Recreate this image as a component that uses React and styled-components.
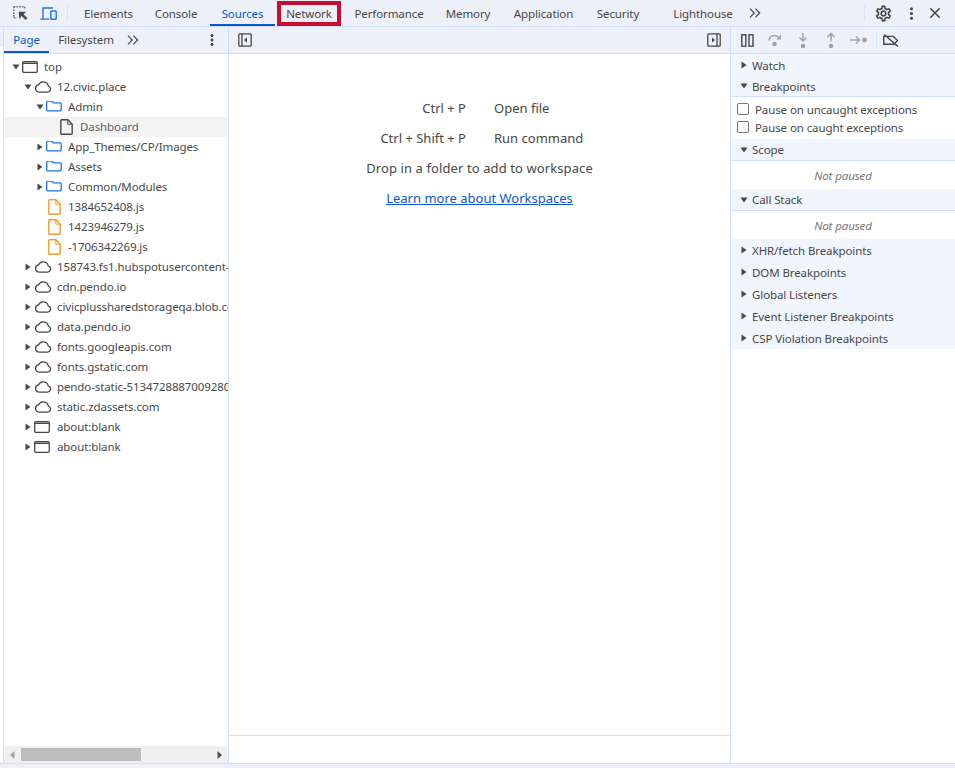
import React from 'react';
import styled, { createGlobalStyle } from 'styled-components';
import { MdOutlineSettings, MdMoreVert, MdClose } from 'react-icons/md';

const GlobalStyle = createGlobalStyle`
  html, body { margin: 0; padding: 0; background: #fff; }
  body { font-family: "Noto Sans", "Open Sans", sans-serif; font-size: 11.5px; letter-spacing: -0.1px; color: #474747; }
  svg { display: block; flex: none; }
`;

const BAR = '#edf0f8';
const HEAD = '#f1f5fd';
const LINE = '#cfe0fb';

const Page = styled.div`
  width: 955px;
  height: 768px;
  display: flex;
  flex-direction: column;
  overflow: hidden;
`;

const TopBar = styled.div`
  height: 26px;
  flex: none;
  display: flex;
  align-items: center;
  background: ${BAR};
  border-bottom: 1px solid ${LINE};
`;

const InspectIcons = styled.div`
  width: 75px;
  height: 100%;
  flex: none;
  display: flex;
  align-items: center;
  padding-left: 13px;
  box-sizing: border-box;
`;

const DeviceSlot = styled.div`
  margin: 0 10px 0 12px;
`;

const VSep = styled.div`
  width: 1px;
  height: 16px;
  flex: none;
  background: #d7e3f7;
  margin: ${p => p.$m || '0'};
`;

const Tab = styled.div`
  position: relative;
  height: 26px;
  box-sizing: border-box;
  width: ${p => p.$w}px;
  flex: none;
  display: flex;
  align-items: center;
  justify-content: center;
  white-space: nowrap;
  color: ${p => (p.$active ? '#0b57d0' : '#474747')};
  border-bottom: 2px solid ${p => (p.$active ? '#0b57d0' : 'transparent')};
  padding-top: 2px;
  padding-left: ${p => p.$pad || 0}px;
`;

const Highlight = styled.div`
  position: absolute;
  left: 2px;
  top: 1px;
  width: 64px;
  height: 25px;
  box-sizing: border-box;
  border: 4px solid #c60c30;
`;

const Spacer = styled.div`
  flex: 1;
`;

const IconButton = styled.div`
  width: ${p => p.$w || 24}px;
  flex: none;
  display: flex;
  align-items: center;
  justify-content: center;
  color: #474747;
`;

const Body = styled.div`
  flex: 1;
  min-height: 0;
  display: flex;
  border-bottom: 1px solid ${LINE};
`;

const EdgeStrip = styled.div`
  width: 3px;
  height: 18px;
  flex: none;
  background: ${BAR};
  border-bottom: 1px solid ${LINE};
`;

const Bottom = styled.div`
  height: 4px;
  flex: none;
  background: ${BAR};
`;

const Navigator = styled.div`
  width: 226px;
  flex: none;
  display: flex;
  flex-direction: column;
  border-left: 1px solid ${LINE};
  border-right: 1px solid ${LINE};
  box-sizing: border-box;
`;

const SubBar = styled.div`
  height: 27px;
  flex: none;
  box-sizing: border-box;
  display: flex;
  align-items: center;
  background: ${BAR};
  border-bottom: 1px solid ${LINE};
`;

const SubTab = styled.div`
  height: 26px;
  box-sizing: border-box;
  width: ${p => p.$w}px;
  flex: none;
  display: flex;
  align-items: center;
  justify-content: center;
  padding-top: 1px;
  color: ${p => (p.$active ? '#0b57d0' : '#474747')};
  border-bottom: 2px solid ${p => (p.$active ? '#0b57d0' : 'transparent')};
`;

const Tree = styled.div`
  flex: 1;
  min-height: 0;
  padding-top: 3px;
  overflow: hidden;
`;

const Row = styled.div`
  height: 20px;
  display: flex;
  align-items: center;
  padding-left: ${p => p.$indent}px;
  white-space: nowrap;
  overflow: hidden;
  background: ${p => (p.$selected ? '#f3f3f3' : 'transparent')};
  color: ${p => (p.$selected ? '#5f5f5f' : '#474747')};
`;

const IconSlot = styled.span`
  display: flex;
  flex: none;
  margin-left: 1px;
`;

const Label = styled.span`
  margin-left: ${p => p.$gap ?? 5}px;
  padding-bottom: 1px;
`;

const ScrollBar = styled.div`
  height: 17px;
  flex: none;
  display: flex;
  align-items: center;
  background: #f0f0f0;
`;

const ScrollArrow = styled.div`
  width: 17px;
  flex: none;
  display: flex;
  justify-content: center;
`;

const ScrollThumb = styled.div`
  width: 120px;
  height: 13px;
  flex: none;
  background: #bdbdbd;
`;

const Center = styled.div`
  width: 501px;
  flex: none;
  display: flex;
  flex-direction: column;
`;

const Landing = styled.div`
  flex: 1;
  min-height: 0;
  padding-top: 39px;
  display: flex;
  flex-direction: column;
  align-items: center;
  font-size: 13px;
  letter-spacing: 0;
`;

const Shortcut = styled.div`
  width: 100%;
  height: 30px;
  display: grid;
  grid-template-columns: 237px 1fr;
  column-gap: 28px;
  align-items: center;
`;

const Keys = styled.div`
  text-align: right;
`;

const Note = styled.div`
  height: 30px;
  display: flex;
  align-items: center;
  letter-spacing: ${p => p.$spread || 0}px;
`;

const DocLink = styled.a`
  color: #0b57d0;
  text-decoration: underline;
`;

const Footer = styled.div`
  height: 27px;
  flex: none;
  border-top: 1px solid ${LINE};
`;

const Debugger = styled.div`
  flex: 1;
  min-width: 0;
  display: flex;
  flex-direction: column;
  border-left: 1px solid ${LINE};
`;

const DebugBar = styled(SubBar)`
  padding-left: 4px;
`;

const Section = styled.div`
  height: ${p => p.$h || 22}px;
  box-sizing: border-box;
  flex: none;
  display: flex;
  align-items: center;
  padding-left: 8px;
  background: ${HEAD};
  border-bottom: ${p => (p.$line ? `1px solid ${LINE}` : '0')};
`;

const SectionLabel = styled.span`
  margin-left: 3px;
`;

const CheckRow = styled.label`
  height: 18px;
  display: flex;
  align-items: center;
  padding-left: 6px;
  gap: 6px;
`;

const Box = styled.span`
  width: 10px;
  height: 10px;
  border: 1px solid #767676;
  border-radius: 2px;
  background: #fff;
`;

const CheckList = styled.div`
  padding: 3px 0;
`;

const Empty = styled.div`
  height: 28px;
  display: flex;
  align-items: center;
  justify-content: center;
  font-style: italic;
  color: #777;
`;

const Triangle = ({ open, color = '#474747' }) => (
  <svg width="10" height="10" viewBox="0 0 10 10">
    <path d={open ? 'M1.5 2.5h7L5 7.5z' : 'M2.5 1.5v7L7.5 5z'} fill={color} />
  </svg>
);

const ScrollLeft = () => (
  <svg width="5" height="8" viewBox="0 0 5 8"><path d="M4.5 0v8L0 4z" fill="#a3a3a3" /></svg>
);

const ScrollRight = () => (
  <svg width="5" height="8" viewBox="0 0 5 8"><path d="M0.5 0v8L5 4z" fill="#505050" /></svg>
);

const Chevrons = () => (
  <svg width="12" height="10" viewBox="0 0 12 10" fill="none" stroke="#474747" strokeWidth="1.2">
    <path d="M1 .6L5.3 5 1 9.4M6.4 .6L10.7 5 6.4 9.4" />
  </svg>
);

const FrameIcon = () => (
  <svg width="16" height="12" viewBox="0 0 16 12" fill="none" stroke="#474747" strokeWidth="1.3">
    <rect x="0.7" y="0.7" width="14.6" height="10.6" rx="1.2" />
    <path d="M0.7 2.3h14.6" strokeWidth="1.4" />
  </svg>
);

const CloudIcon = () => (
  <svg width="18" height="13" viewBox="0 1 18 13" fill="none" stroke="#474747" strokeWidth="1.25">
    <path d="M4.6 12h9.2a3 3 0 0 0 .5-5.9A5.2 5.2 0 0 0 4.5 4.9a3.6 3.6 0 0 0 .1 7.1z" />
  </svg>
);

const FolderIcon = () => (
  <svg width="16" height="12" viewBox="0 0.5 16 12" fill="none" stroke="#1a73e8" strokeWidth="1.3">
    <path d="M.7 1.7a1 1 0 0 1 1-1h4l1.5 1.6h7a1 1 0 0 1 1 1v6a1 1 0 0 1-1 1H1.7a1 1 0 0 1-1-1z" />
  </svg>
);

const FileIcon = ({ color }) => (
  <svg width="13" height="16" viewBox="0 0 13 16" fill="none" stroke={color} strokeWidth="1.4">
    <path d="M1.8 .8h6l4.4 4.4v9a1 1 0 0 1-1 1H1.8a1 1 0 0 1-1-1V1.8a1 1 0 0 1 1-1z" />
    <path d="M7.8 .8v4.4h4.4" strokeWidth="1" />
  </svg>
);

const InspectIcon = () => (
  <svg width="15" height="15" viewBox="0 0 15 15" fill="none" stroke="#6a6a6a" strokeWidth="1.4">
    <path d="M.7 .7h11M.7 .7v11M.7 11.7h3M11.7 .7v3" strokeDasharray="1.6 1.2" />
    <path d="M5.8 5.8h7.4l-2.7 2.5 4 4-1.8 1.8-4-4-2.4 2.9z" fill="#474747" stroke="none" />
  </svg>
);

const DeviceIcon = () => (
  <svg width="17" height="13" viewBox="0 0 17 13" fill="none" stroke="#1a73e8" strokeWidth="1.4">
    <path d="M3 11.6V1h10M.3 12.1h9" />
    <rect x="10.8" y="4" width="5.4" height="8.2" rx="0.8" />
  </svg>
);

const PanelIcon = ({ right }) => (
  <svg width="14" height="14" viewBox="0 0 14 14" fill="none" stroke="#474747" strokeWidth="1.3">
    <rect x="0.8" y="0.8" width="12.4" height="12.4" rx="1" />
    <path d={right ? 'M10 0.8v12.4' : 'M4 0.8v12.4'} />
    <path d={right ? 'M5 4.5v5L8 7z' : 'M9 4.5v5L6 7z'} fill="#474747" stroke="none" />
  </svg>
);

const PauseIcon = () => (
  <svg width="13" height="13" viewBox="0 0 13 13" fill="none" stroke="#474747" strokeWidth="1.4">
    <rect x="0.8" y="0.8" width="4" height="11.4" />
    <rect x="8" y="0.8" width="4" height="11.4" />
  </svg>
);

const StepOverIcon = () => (
  <svg width="14" height="14" viewBox="0 0 14 14" fill="none" stroke="#a3a3a3" strokeWidth="1.6">
    <path d="M1 7.5a5.5 5.5 0 0 1 10-2.6" />
    <path d="M13 1.5v5H8.2z" fill="#a3a3a3" stroke="none" />
    <circle cx="6.5" cy="11" r="2.3" fill="#a3a3a3" stroke="none" />
  </svg>
);

const StepIntoIcon = ({ up }) => (
  <svg width="12" height="17" viewBox="0 0 12 17" fill="none" stroke="#a3a3a3" strokeWidth="1.5">
    <path d={up ? 'M6 9.5V1.5M2.5 5L6 1.5 9.5 5' : 'M6 1v8M2.5 5.5L6 9l3.5-3.5'} />
    <circle cx="6" cy="14" r="2.3" fill="#a3a3a3" stroke="none" />
  </svg>
);

const StepIcon = () => (
  <svg width="18" height="10" viewBox="0 0 18 10" fill="none" stroke="#a3a3a3" strokeWidth="1.4">
    <path d="M0 5h9.5M6 1.5L9.5 5 6 8.5" />
    <circle cx="14.5" cy="5" r="2.4" fill="#a3a3a3" stroke="none" />
  </svg>
);

const DeactivateIcon = () => (
  <svg width="16" height="13" viewBox="0 0 16 13" fill="none" stroke="#474747" strokeWidth="1.4">
    <path d="M.8 2.4h9.6L14.4 6.5l-3.3 3.8H.8z" />
    <path d="M1.2 .5L15 12.5" />
  </svg>
);

const folders = ['App_Themes/CP/Images', 'Assets', 'Common/Modules'];
const files = ['1384652408.js', '1423946279.js', '-1706342269.js'];
const hosts = [
  '158743.fs1.hubspotusercontent-na1.net',
  'cdn.pendo.io',
  'civicplussharedstorageqa.blob.core.windows.net',
  'data.pendo.io',
  'fonts.googleapis.com',
  'fonts.gstatic.com',
  'pendo-static-5134728887009280.storage.googleapis.com',
  'static.zdassets.com',
];
const tabs = [
  ['Elements', 67],
  ['Console', 68],
  ['Sources', 65],
];
const tabsAfter = [
  ['Performance', 92],
  ['Memory', 66],
  ['Application', 85],
  ['Security', 64],
];
const closed = ['XHR/fetch Breakpoints', 'DOM Breakpoints', 'Global Listeners', 'Event Listener Breakpoints', 'CSP Violation Breakpoints'];

export default function App() {
  return (
    <Page>
      <GlobalStyle />
      <TopBar>
        <InspectIcons>
          <InspectIcon />
          <DeviceSlot><DeviceIcon /></DeviceSlot>
          <VSep />
        </InspectIcons>
        {tabs.map(([name, w]) => (
          <Tab key={name} $w={w} $active={name === 'Sources'}>{name}</Tab>
        ))}
        <Tab $w={68}>
          Network
          <Highlight />
        </Tab>
        {tabsAfter.map(([name, w]) => (
          <Tab key={name} $w={w}>{name}</Tab>
        ))}
        <Tab $w={94} $pad={12}>Lighthouse</Tab>
        <IconButton $w={22}><Chevrons /></IconButton>
        <Spacer />
        <VSep $m="0 2px 0 0" />
        <IconButton $w={32}><MdOutlineSettings size={19} /></IconButton>
        <IconButton $w={24}><MdMoreVert size={19} /></IconButton>
        <IconButton $w={24}><MdClose size={18} /></IconButton>
        <IconButton $w={8} />
      </TopBar>
      <Body>
        <EdgeStrip />
        <Navigator>
          <SubBar>
            <SubTab $w={45} $active>Page</SubTab>
            <SubTab $w={74}>Filesystem</SubTab>
            <IconButton $w={20}><Chevrons /></IconButton>
            <Spacer />
            <IconButton $w={32}><MdMoreVert size={18} /></IconButton>
          </SubBar>
          <Tree>
            <Row $indent={7}><Triangle open /><IconSlot><FrameIcon /></IconSlot><Label $gap={6}>top</Label></Row>
            <Row $indent={19}><Triangle open /><IconSlot><CloudIcon /></IconSlot><Label>12.civic.place</Label></Row>
            <Row $indent={31}><Triangle open /><IconSlot><FolderIcon /></IconSlot><Label $gap={6}>Admin</Label></Row>
            <Row $indent={56} $selected><FileIcon color="#474747" /><Label $gap={7}>Dashboard</Label></Row>
            {folders.map(name => (
              <Row key={name} $indent={31}><Triangle /><IconSlot><FolderIcon /></IconSlot><Label $gap={6}>{name}</Label></Row>
            ))}
            {files.map(name => (
              <Row key={name} $indent={44}><FileIcon color="#ea9c35" /><Label $gap={7}>{name}</Label></Row>
            ))}
            {hosts.map(name => (
              <Row key={name} $indent={19}><Triangle /><IconSlot><CloudIcon /></IconSlot><Label>{name}</Label></Row>
            ))}
            <Row $indent={19}><Triangle /><IconSlot><FrameIcon /></IconSlot><Label $gap={7}>about:blank</Label></Row>
            <Row $indent={19}><Triangle /><IconSlot><FrameIcon /></IconSlot><Label $gap={7}>about:blank</Label></Row>
          </Tree>
          <ScrollBar>
            <ScrollArrow><ScrollLeft /></ScrollArrow>
            <ScrollThumb />
            <Spacer />
            <ScrollArrow><ScrollRight /></ScrollArrow>
          </ScrollBar>
        </Navigator>
        <Center>
          <SubBar>
            <IconButton $w={32}><PanelIcon /></IconButton>
            <Spacer />
            <IconButton $w={32}><PanelIcon right /></IconButton>
          </SubBar>
          <Landing>
            <Shortcut><Keys>Ctrl + P</Keys><span>Open file</span></Shortcut>
            <Shortcut><Keys>Ctrl + Shift + P</Keys><span>Run command</span></Shortcut>
            <Note $spread={0.1}>Drop in a folder to add to workspace</Note>
            <Note><DocLink>Learn more about Workspaces</DocLink></Note>
          </Landing>
          <Footer />
        </Center>
        <Debugger>
          <DebugBar>
            <IconButton $w={24}><PauseIcon /></IconButton>
            <IconButton $w={32}><StepOverIcon /></IconButton>
            <IconButton $w={24}><StepIntoIcon /></IconButton>
            <IconButton $w={32}><StepIntoIcon up /></IconButton>
            <IconButton $w={24}><StepIcon /></IconButton>
            <VSep $m="0 6px 0 5px" />
            <IconButton $w={16}><DeactivateIcon /></IconButton>
          </DebugBar>
          <Section><Triangle /><SectionLabel>Watch</SectionLabel></Section>
          <Section $h={21} $line><Triangle open /><SectionLabel>Breakpoints</SectionLabel></Section>
          <CheckList>
            <CheckRow><Box />Pause on uncaught exceptions</CheckRow>
            <CheckRow><Box />Pause on caught exceptions</CheckRow>
          </CheckList>
          <Section $line><Triangle open /><SectionLabel>Scope</SectionLabel></Section>
          <Empty>Not paused</Empty>
          <Section $line><Triangle open /><SectionLabel>Call Stack</SectionLabel></Section>
          <Empty>Not paused</Empty>
          {closed.map(name => (
            <Section key={name}><Triangle /><SectionLabel>{name}</SectionLabel></Section>
          ))}
        </Debugger>
      </Body>
      <Bottom />
    </Page>
  );
}
